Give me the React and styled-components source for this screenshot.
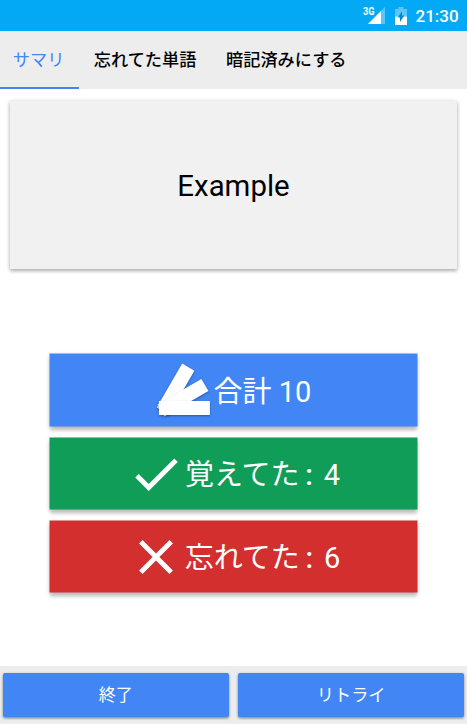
import React from "react";
import styled, { createGlobalStyle } from "styled-components";

const GlobalStyle = createGlobalStyle`
  *, *::before, *::after { box-sizing: border-box; }
  body {
    margin: 0;
    background: #fff;
    font-family: Roboto, "Noto Sans CJK JP", sans-serif;
  }
`;

const Screen = styled.div`
  width: 467px;
  height: 724px;
  display: flex;
  flex-direction: column;
  overflow: hidden;
`;

const StatusBar = styled.header`
  height: 30.5px;
  flex: none;
  display: flex;
  align-items: center;
  justify-content: flex-end;
  padding: 1px 8px 0 0;
  background: #03a9f4;
  color: #fff;
`;

const SignalIcon = styled.svg`
  width: 24px;
  height: 20px;
  margin-right: 8px;
`;

const BatteryIcon = styled.svg`
  width: 12px;
  height: 20px;
  margin-right: 9px;
`;

const NetworkLabel = styled.text`
  font: 700 10px Roboto, sans-serif;
  fill: #fff;
`;

const Clock = styled.time`
  font-size: 17px;
  font-weight: 500;
  line-height: 30px;
  width: 43.5px;
  white-space: nowrap;
`;

const Tabs = styled.nav`
  height: 58.5px;
  flex: none;
  display: flex;
  background: #ededed;
`;

const Tab = styled.button`
  border: 0;
  border-bottom: 2px solid ${(p) => (p.$active ? "#4285f4" : "transparent")};
  background: none;
  padding: 0 14.8px 0 ${(p) => (p.$active ? 12.8 : 14.8)}px;
  font: 500 17.2px/58px Roboto, "Noto Sans CJK JP", sans-serif;
  height: 58.5px;
  color: ${(p) => (p.$active ? "#4285f4" : "#000")};
  white-space: nowrap;

  &:first-child {
    font-weight: 400;
    width: 79px;
  }
`;

const WordCard = styled.section`
  height: 168px;
  flex: none;
  margin: 12px 9.6px 0;
  padding-top: 2px;
  display: flex;
  align-items: center;
  justify-content: center;
  background: #f1f1f1;
  box-shadow: 0 1px 4px rgba(0, 0, 0, 0.3), 0 3px 3px rgba(0, 0, 0, 0.1);
  font-size: 29.4px;
  color: #000;
`;

const Results = styled.main`
  flex: 1;
  display: flex;
  flex-direction: column;
  gap: 12px;
  padding: 85px 50px 0;
`;

const Tile = styled.div`
  height: 71px;
  flex: none;
  display: flex;
  align-items: center;
  justify-content: center;
  background: ${(p) => p.$color};
  color: #fff;
  font-size: 29px;
  white-space: pre;
  box-shadow: 0 0 0 0.5px ${(p) => p.$color}, 0 5px 3px rgba(0, 0, 0, 0.13), 0 2px 5px rgba(0, 0, 0, 0.24);

  &:first-child {
    height: 72px;
  }
`;

const TileLabel = styled.span`
  line-height: 58px;
  padding-top: 3px;
`;

const Colon = styled.span`
  display: inline-block;
  width: 17px;
  padding-left: 2px;
  text-align: center;
  font-weight: 500;
`;

const TileIcon = styled.svg`
  width: 58px;
  height: 58px;
  flex: none;
  fill: #fff;
`;

const Card = styled.polygon`
  filter: drop-shadow(0 1px 1px rgba(0, 0, 0, 0.35));
`;

const Footer = styled.footer`
  height: 58.5px;
  flex: none;
  display: flex;
  gap: 9.6px;
  padding: 7.5px 3px 7px;
  background: #ededed;
`;

const ActionButton = styled.button`
  flex: 1;
  border: 0;
  border-radius: 2px;
  padding: 0;
  background: #4285f4;
  color: #fff;
  font: 400 17.2px/44px Roboto, "Noto Sans CJK JP", sans-serif;
  box-shadow: 0 1px 3px rgba(0, 0, 0, 0.4), 0 2px 2px rgba(0, 0, 0, 0.1);
`;

const tabs = ["サマリ", "忘れてた単語", "暗記済みにする"];

const FanIcon = () => (
  <TileIcon viewBox="0 0 58 58">
    <Card points="26.2,2.5 38.4,9.7 12.9,53.8 0.7,46.6" />
    <Card points="45.4,18 52.4,30 8.4,55.5 1.4,43.5" />
    <Card points="2.9,40 53.9,40 53.9,54 2.9,54" />
  </TileIcon>
);

const CheckIcon = () => (
  <TileIcon viewBox="0 0 24 24">
    <path d="M9 16.17L4.83 12l-1.42 1.41L9 19 21 7l-1.41-1.41z" />
  </TileIcon>
);

const CloseIcon = () => (
  <TileIcon viewBox="0 0 24 24">
    <path d="M19 6.41L17.59 5 12 10.59 6.41 5 5 6.41 10.59 12 5 17.59 6.41 19 12 13.41 17.59 19 19 17.59 13.41 12z" />
  </TileIcon>
);

export default function App() {
  return (
    <Screen>
      <GlobalStyle />
      <StatusBar>
        <SignalIcon viewBox="0 0 24 20">
          <path d="M22 1v17H5z" fill="#fff" fillOpacity="0.35" />
          <path d="M18 5V18H5z" fill="#fff" />
          <path d="M0 0h12.5v9.5H0z" fill="#03a9f4" />
          <NetworkLabel x="0" y="8.5" textLength="11.5" lengthAdjust="spacingAndGlyphs">3G</NetworkLabel>
        </SignalIcon>
        <BatteryIcon viewBox="0 0 12 20">
          <path d="M0 3h3.5V1h5v2H12v7.5H0z" fill="#fff" fillOpacity="0.35" />
          <path d="M0 10.5h12V19H0z" fill="#fff" />
          <path d="M7 5.5v4h2.3L5 16v-4.5H2.7z" fill="#0288d1" />
        </BatteryIcon>
        <Clock>21:30</Clock>
      </StatusBar>
      <Tabs>
        {tabs.map((label, i) => (
          <Tab key={label} $active={i === 0}>{label}</Tab>
        ))}
      </Tabs>
      <WordCard>Example</WordCard>
      <Results>
        <Tile $color="#4285f4">
          <FanIcon />
          <TileLabel>合計 10</TileLabel>
        </Tile>
        <Tile $color="#0f9d58">
          <CheckIcon />
          <TileLabel>覚えてた<Colon>:</Colon> 4</TileLabel>
        </Tile>
        <Tile $color="#d32f2f">
          <CloseIcon />
          <TileLabel>忘れてた<Colon>:</Colon> 6</TileLabel>
        </Tile>
      </Results>
      <Footer>
        <ActionButton>終了</ActionButton>
        <ActionButton>リトライ</ActionButton>
      </Footer>
    </Screen>
  );
}
